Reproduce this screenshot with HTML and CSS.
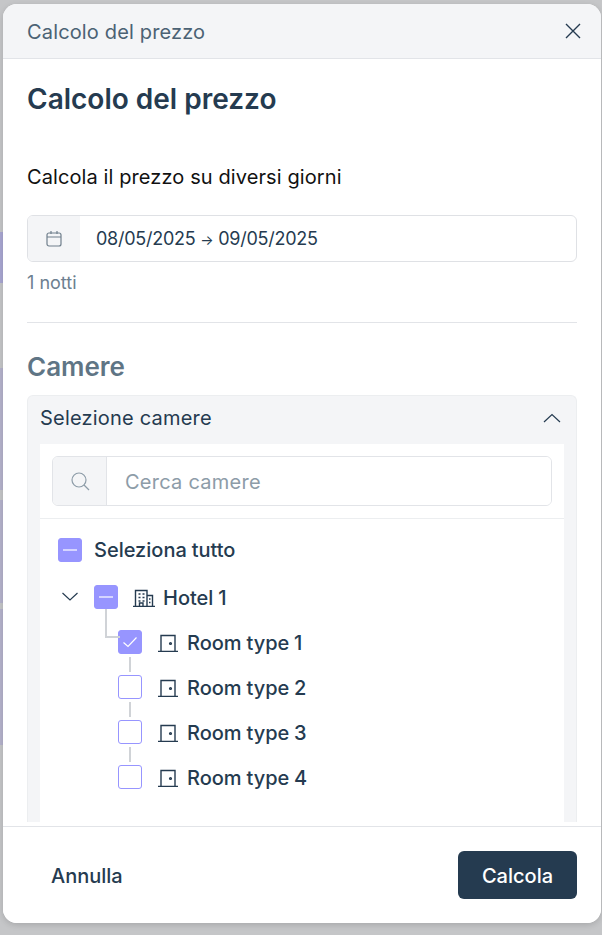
FILE: index.html
```html
<!DOCTYPE html>
<html lang="en">
<head>
    <meta charset="UTF-8">
    <meta name="viewport" content="width=device-width, initial-scale=1.0">
    <title>Calcolo del prezzo</title>
    <link rel="stylesheet" href="styles.css">
</head>
<body>

    <div class="modal">
        <div class="modal-top">
            <span>Calcolo del prezzo</span>
            <svg class="close" width="16" height="16" viewBox="0 0 16 16"><path d="M1 1l14 14M15 1L1 15"/></svg>
        </div>

        <div class="modal-body">
            <h2>Calcolo del prezzo</h2>
            <p class="intro">Calcola il prezzo su diversi giorni</p>

            <div class="date-field">
                <div class="addon date-addon">
                    <svg width="18" height="18" viewBox="0 0 18 18"><rect x="2" y="3" width="14" height="13" rx="2"/><path d="M2 7h14M6 1v3M12 1v3"/></svg>
                </div>
                <span class="date-text">08/05/2025 <span class="arrow">→</span> 09/05/2025</span>
            </div>
            <p class="nights">1 notti</p>

            <hr>

            <h3>Camere</h3>

            <div class="panel">
                <div class="panel-head">
                    <span>Selezione camere</span>
                    <svg width="18" height="10" viewBox="0 0 18 10"><path d="M1 9l8-7.5L17 9"/></svg>
                </div>
                <div class="panel-inner">
                    <div class="search-wrap">
                        <div class="search">
                            <div class="addon search-addon">
                                <svg width="20" height="20" viewBox="0 0 20 20"><circle cx="9" cy="9" r="7"/><path d="M14 14l5 5"/></svg>
                            </div>
                            <input type="text" placeholder="Cerca camere">
                        </div>
                    </div>

                    <div class="tree">
                        <div class="row select-all">
                            <span class="check on"><i></i></span>
                            <span>Seleziona tutto</span>
                        </div>
                        <div class="row hotel">
                            <svg class="chevron" width="16" height="9" viewBox="0 0 16 9"><path d="M.5 1L8 8l7.5-7"/></svg>
                            <span class="check on"><i></i></span>
                            <svg class="row-icon" width="22" height="20" viewBox="0 0 22 20"><path d="M0 19.500h22M2.500 19V3.500h11.500V19M14 8.500h5.500V19M5.500 7h2M9.500 7h2M5.500 10.500h2M9.500 10.500h2M5.500 14h2M9.500 14h2M6.500 19v-3h3.500v3M16 12h1.500M16 15.500h1.500"/></svg>
                            <span>Hotel 1</span>
                        </div>
                        <div class="row room first">
                            <span class="check on">
                                <svg width="16" height="12" viewBox="0 0 16 12"><path d="M1.500 6.500l4.500 4 8.500-9"/></svg>
                            </span>
                            <svg class="row-icon" width="20" height="20" viewBox="0 0 20 20"><path d="M0 19.500h20M3 19V3.500h14V19"/><circle cx="12.500" cy="11.500" r=".9"/></svg>
                            <span>Room type 1</span>
                        </div>
                        <div class="row room">
                            <span class="check"></span>
                            <svg class="row-icon" width="20" height="20" viewBox="0 0 20 20"><path d="M0 19.500h20M3 19V3.500h14V19"/><circle cx="12.500" cy="11.500" r=".9"/></svg>
                            <span>Room type 2</span>
                        </div>
                        <div class="row room">
                            <span class="check"></span>
                            <svg class="row-icon" width="20" height="20" viewBox="0 0 20 20"><path d="M0 19.500h20M3 19V3.500h14V19"/><circle cx="12.500" cy="11.500" r=".9"/></svg>
                            <span>Room type 3</span>
                        </div>
                        <div class="row room">
                            <span class="check"></span>
                            <svg class="row-icon" width="20" height="20" viewBox="0 0 20 20"><path d="M0 19.500h20M3 19V3.500h14V19"/><circle cx="12.500" cy="11.500" r=".9"/></svg>
                            <span>Room type 4</span>
                        </div>
                    </div>
                </div>
            </div>
        </div>

        <div class="modal-foot">
            <button class="btn-cancel">Annulla</button>
            <button class="btn-main">Calcola</button>
        </div>
    </div>

</body>
</html>
```

FILE: styles.css
```css
* {
    box-sizing: border-box;
}
html, body {
    height: 100%;
}
body {
    margin: 0;
    padding: 4px 1px 12px 3px;
    overflow: hidden;
    font-family: Inter, "Liberation Sans", sans-serif;
    color: #253b50;
    background-color: #c5c6c8;
    /* the page behind the dialog, seen as a thin strip on the left */
    background-image: linear-gradient(to bottom,
        transparent 232px, #a9a7d2 232px, #a9a7d2 283px,
        transparent 283px, transparent 368px, #b5b3cc 368px, #b5b3cc 490px,
        transparent 490px, transparent 500px, #b5b3cc 500px, #b5b3cc 603px,
        transparent 603px, transparent 609px, #b5b3cc 609px, #b5b3cc 745px,
        transparent 745px);
    background-size: 3px 100%;
    background-repeat: no-repeat;
}
.modal {
    display: flex;
    flex-direction: column;
    height: 100%;
    background-color: white;
    border-radius: 14px;
    overflow: hidden;
    box-shadow: 0px 2px 6px rgba(0, 0, 0, 0.15);
}
svg {
    fill: none;
    stroke: currentColor;
    stroke-width: 1.2;
    flex: none;
}

/* top bar */
.modal-top {
    display: flex;
    justify-content: space-between;
    align-items: center;
    height: 55px;
    flex: none;
    padding: 0 20px 0 24px;
    font-size: 20px;
    letter-spacing: 0.15px;
    color: #4b6274;
    background-color: #f4f5f7;
    border-bottom: 1px solid #e2e4e8;
}
.modal-top span {
    padding-top: 2px;
}
.close {
    color: #253b50;
    stroke-width: 1.4;
}

/* body */
.modal-body {
    flex: 1;
    min-height: 0;
    overflow: hidden;
    padding: 0 24px;
}
h2 {
    margin: 21px 0 0;
    font-size: 28px;
    line-height: 38px;
    font-weight: 600;
}
.intro {
    margin: 47px 0 0;
    font-size: 20px;
    line-height: 24px;
    letter-spacing: 0.1px;
    color: #111;
}
.date-field {
    display: flex;
    align-items: center;
    height: 47px;
    margin-top: 26px;
    border: 1px solid #dfe1e5;
    border-radius: 6px;
    overflow: hidden;
}
.addon {
    display: flex;
    justify-content: center;
    align-items: center;
    height: 100%;
    flex: none;
    background-color: #f4f5f7;
}
.date-addon {
    width: 52px;
    color: #6f7f8c;
}
.date-text {
    padding-left: 16px;
    font-size: 18px;
    letter-spacing: -0.25px;
}
.arrow {
    font-size: 14px;
}
.nights {
    margin: 10px 0 0;
    font-size: 18px;
    line-height: 22px;
    color: #6c8090;
}
hr {
    margin: 28px 0 0;
    border: none;
    border-top: 1px solid #e2e4e8;
}
h3 {
    margin: 26px 0 0;
    font-size: 26px;
    line-height: 36px;
    font-weight: 600;
    color: #5f7585;
}

/* rooms panel */
.panel {
    margin-top: 10px;
    padding: 0 12px;
    background-color: #f4f5f7;
    border: 1px solid #eceef0;
    border-bottom: none;
    border-radius: 6px 6px 0 0;
}
.panel-head {
    display: flex;
    justify-content: space-between;
    align-items: center;
    height: 48px;
    padding: 0 3px 4px 0;
    font-size: 20px;
    letter-spacing: 0.2px;
}
.panel-inner {
    background-color: white;
}
.search-wrap {
    padding: 12px 12px;
    border-bottom: 1px solid #eceef0;
}
.search {
    display: flex;
    height: 50px;
    border: 1px solid #e2e4e8;
    border-radius: 6px;
    overflow: hidden;
}
.search-addon {
    width: 54px;
    color: #8d9ca8;
    border-right: 1px solid #e2e4e8;
}
.search input {
    flex: 1;
    min-width: 0;
    padding: 2px 18px 0;
    border: none;
    outline: none;
    font-family: inherit;
    font-size: 20px;
    letter-spacing: 0.25px;
}
.search input::placeholder {
    color: #8d9ca8;
    opacity: 1;
}

/* tree */
.tree {
    padding: 7px 0 23px 18px;
}
.row {
    position: relative;
    display: flex;
    align-items: center;
    height: 45px;
    font-size: 20px;
    font-weight: 500;
    word-spacing: -0.5px;
}
.row.select-all {
    height: 48px;
}
.hotel > span:last-child, .room > span:last-child {
    padding-top: 2px;
}
.check {
    display: flex;
    justify-content: center;
    align-items: center;
    width: 24px;
    height: 24px;
    flex: none;
    background-color: white;
    border: 1px solid #9795ff;
    border-radius: 3px;
}
.check.on {
    background-color: #9795ff;
    color: white;
}
.check i {
    width: 14px;
    height: 2px;
    background-color: #d5d4ff;
}
.select-all .check {
    margin-right: 12px;
}
.chevron {
    margin: 0 16px 0 4px;
}
.row-icon {
    stroke-width: 1.4;
}
.hotel .row-icon {
    margin: 0 8px 0 15px;
}
.room {
    margin-left: 60px;
}
.room .row-icon {
    margin: 0 9px 0 16px;
}
.room::before {
    content: "";
    position: absolute;
    left: 11px;
    top: -7px;
    width: 2px;
    height: 15px;
    background-color: #d0d3d7;
}
.room.first::before {
    left: -13px;
    top: -10px;
    width: 13px;
    height: 27px;
    background: none;
    border-left: 2px solid #d0d3d7;
    border-bottom: 2px solid #d0d3d7;
}

/* footer */
.modal-foot {
    display: flex;
    justify-content: space-between;
    align-items: center;
    height: 97px;
    flex: none;
    padding: 0 24px;
    background-color: white;
    border-top: 1px solid #e2e4e8;
}
button {
    height: 48px;
    padding: 2px 24px 0;
    border: none;
    border-radius: 6px;
    font-family: inherit;
    font-size: 20px;
    font-weight: 500;
    cursor: pointer;
}
.btn-cancel {
    background: none;
    color: #253b50;
}
.btn-main {
    width: 119px;
    padding: 2px 0 0;
    background-color: #253b50;
    color: white;
}
```
